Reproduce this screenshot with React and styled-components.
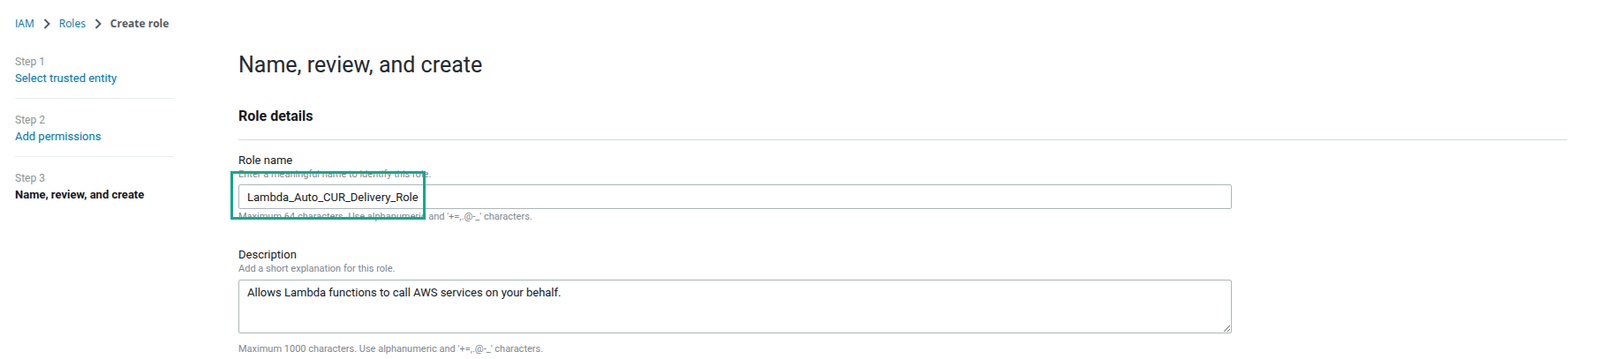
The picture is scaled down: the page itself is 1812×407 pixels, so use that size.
import styled, { createGlobalStyle } from "styled-components";

const GlobalStyle = createGlobalStyle`
  body {
    margin: 0;
    background: #fff;
    font-family: Roboto, "Liberation Sans", Arial, sans-serif;
    color: #16191f;
  }
`;

const Page = styled.div`
  width: 1812px;
  height: 407px;
  overflow: hidden;
`;

const Breadcrumbs = styled.nav`
  display: flex;
  align-items: center;
  gap: 10px;
  padding: 17px 17px 0;
  height: 20px;
  font-family: "Open Sans", Roboto, sans-serif;
  font-size: 12px;
  line-height: 20px;
`;

const Crumb = styled.a`
  color: ${(p) => (p.$current ? "#545b64" : "#0073bb")};
  font-weight: ${(p) => (p.$current ? 700 : 400)};
  text-decoration: none;
`;

const Layout = styled.div`
  display: flex;
  margin-top: 18px;
`;

const Nav = styled.ol`
  list-style: none;
  margin: 0;
  padding: 0 0 0 17px;
  width: 180px;
  flex-shrink: 0;
`;

const Step = styled.li`
  padding: 7px 0 12px;
  border-bottom: ${(p) => (p.$last ? "none" : "1px solid #eaeded")};
  & + & {
    padding-top: 16px;
  }
`;

const StepLabel = styled.div`
  font-size: 12px;
  line-height: 16px;
  color: #879596;
`;

const StepTitle = styled.div`
  font-size: 13px;
  line-height: 20px;
  margin-top: 1px;
  color: ${(p) => (p.$active ? "#16191f" : "#0073bb")};
  font-weight: ${(p) => (p.$active ? 700 : 400)};
`;

const Main = styled.main`
  flex: 1;
  margin-left: 73px;
  padding-right: 37px;
`;

const Title = styled.h1`
  margin: 3px 0 0;
  font-size: 25px;
  line-height: 32px;
  font-weight: 400;
  color: #232a31;
`;

const SectionHeader = styled.h2`
  margin: 30px 0 0;
  padding-bottom: 14px;
  border-bottom: 1px solid #d5dbdb;
  font-size: 16px;
  line-height: 24px;
  font-weight: 700;
  color: #16191f;
`;

const Field = styled.div`
  position: relative;
  margin-top: ${(p) => p.$top}px;
`;

const Label = styled.label`
  display: block;
  font-size: 13px;
  line-height: 16px;
  color: #16191f;
`;

const Hint = styled.div`
  font-size: 11px;
  line-height: 16px;
  color: #7d868f;
  margin-top: ${(p) => p.$top || 0}px;
`;

const TextInput = styled.input`
  display: block;
  box-sizing: border-box;
  width: 1125px;
  height: 28px;
  margin-top: 3px;
  padding: 0 9px;
  border: 1px solid #aab7b8;
  border-radius: 2px;
  font-family: Roboto, sans-serif;
  font-size: 13px;
  color: #16191f;
  outline: none;
`;

const TextArea = styled.textarea`
  display: block;
  box-sizing: border-box;
  width: 1125px;
  height: 61px;
  margin-top: 4px;
  padding: 4px 9px;
  border: 1px solid #aab7b8;
  border-radius: 2px;
  font-family: Roboto, sans-serif;
  font-size: 13px;
  line-height: 20px;
  color: #16191f;
  outline: none;
`;

const Highlight = styled.div`
  position: absolute;
  left: -9px;
  top: 20px;
  width: 221px;
  height: 55px;
  box-sizing: border-box;
  border: 3px solid #14a88a;
  pointer-events: none;
`;

function Chevron() {
  return (
    <svg width="8" height="12" viewBox="0 0 8 12">
      <polyline points="1.5,1 6.5,6 1.5,11" fill="none" stroke="#545b64" strokeWidth="2" />
    </svg>
  );
}

const steps = [
  { label: "Step 1", title: "Select trusted entity" },
  { label: "Step 2", title: "Add permissions" },
  { label: "Step 3", title: "Name, review, and create", active: true },
];

export default function App() {
  return (
    <Page>
      <GlobalStyle />
      <Breadcrumbs>
        <Crumb href="#">IAM</Crumb>
        <Chevron />
        <Crumb href="#">Roles</Crumb>
        <Chevron />
        <Crumb $current>Create role</Crumb>
      </Breadcrumbs>
      <Layout>
        <Nav>
          {steps.map((s, i) => (
            <Step key={s.label} $last={i === steps.length - 1}>
              <StepLabel>{s.label}</StepLabel>
              <StepTitle $active={s.active}>{s.title}</StepTitle>
            </Step>
          ))}
        </Nav>
        <Main>
          <Title>Name, review, and create</Title>
          <SectionHeader>Role details</SectionHeader>
          <Field $top={15}>
            <Label>Role name</Label>
            <Hint>Enter a meaningful name to identify this role.</Hint>
            <TextInput readOnly value="Lambda_Auto_CUR_Delivery_Role" />
            <Hint $top={1}>Maximum 64 characters. Use alphanumeric and '+=,.@-_' characters.</Hint>
            <Highlight />
          </Field>
          <Field $top={27}>
            <Label>Description</Label>
            <Hint>Add a short explanation for this role.</Hint>
            <TextArea readOnly defaultValue="Allows Lambda functions to call AWS services on your behalf." />
            <Hint $top={10}>Maximum 1000 characters. Use alphanumeric and '+=,.@-_' characters.</Hint>
          </Field>
        </Main>
      </Layout>
    </Page>
  );
}
